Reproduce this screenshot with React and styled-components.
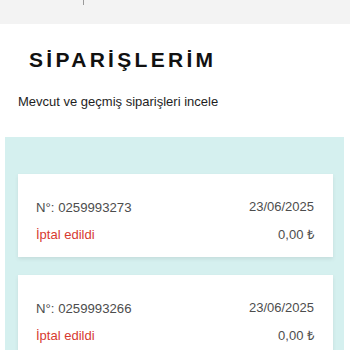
import styled, { createGlobalStyle } from 'styled-components';

const GlobalStyle = createGlobalStyle`
  html, body {
    margin: 0;
    padding: 0;
    background: #ffffff;
    font-family: "Liberation Sans", Arial, sans-serif;
  }
`;

const orders = [
  { no: '0259993273', date: '23/06/2025', status: 'İptal edildi', total: '0,00 ₺' },
  { no: '0259993266', date: '23/06/2025', status: 'İptal edildi', total: '0,00 ₺' },
];

const App = () => {
  return (
    <Page>
      <GlobalStyle />
      <TopBar>
        <Caret />
      </TopBar>
      <Header>
        <Title>SİPARİŞLERİM</Title>
        <Subtitle>Mevcut ve geçmiş siparişleri incele</Subtitle>
      </Header>
      <OrdersPanel>
        {orders.map((order, idx) => (
          <OrderCard key={order.no + idx}>
            <Row>
              <OrderNo>N°: {order.no}</OrderNo>
              <OrderDate>{order.date}</OrderDate>
            </Row>
            <Row>
              <Status>{order.status}</Status>
              <Total>{order.total}</Total>
            </Row>
          </OrderCard>
        ))}
      </OrdersPanel>
    </Page>
  );
};

export default App;

const Page = styled.div`
  width: 350px;
  height: 350px;
  overflow: hidden;
  display: flex;
  flex-direction: column;
`;

const TopBar = styled.div`
  height: 24px;
  flex: none;
  background: #f3f3f3;
  position: relative;
`;

const Caret = styled.span`
  position: absolute;
  left: 83px;
  top: 0;
  width: 1px;
  height: 5px;
  background: #9a9a9a;
`;

const Header = styled.div`
  padding: 23px 0 0 18px;
  height: 90px;
  flex: none;
`;

const Title = styled.h1`
  margin: 0 0 0 11px;
  font-size: 21px;
  font-weight: 700;
  letter-spacing: 3.3px;
  color: #111;
  line-height: 25px;
`;

const Subtitle = styled.p`
  margin: 22px 0 0 0;
  font-size: 13px;
  color: #1e1e1e;
  line-height: 16px;
`;

const OrdersPanel = styled.div`
  margin: 0 6px 0 5px;
  flex: 1;
  background: #d5f0ef;
  padding: 37px 11px 0 13px;
  display: flex;
  flex-direction: column;
  gap: 18px;
`;

const OrderCard = styled.div`
  background: #ffffff;
  box-shadow: 0 2px 4px rgba(0, 0, 0, 0.08);
  padding: 26px 19px 0 18px;
  height: 57px;
  display: flex;
  flex-direction: column;
  gap: 12px;
`;

const Row = styled.div`
  display: flex;
  justify-content: space-between;
  align-items: center;
  font-size: 13px;
  line-height: 15px;
`;

const OrderNo = styled.span`
  color: #4d4d4d;
  font-size: 13.2px;
`;

const OrderDate = styled.span`
  color: #4d4d4d;
  position: relative;
  top: -1px;
`;

const Status = styled.span`
  color: #d7392f;
`;

const Total = styled.span`
  color: #4d4d4d;
`;
